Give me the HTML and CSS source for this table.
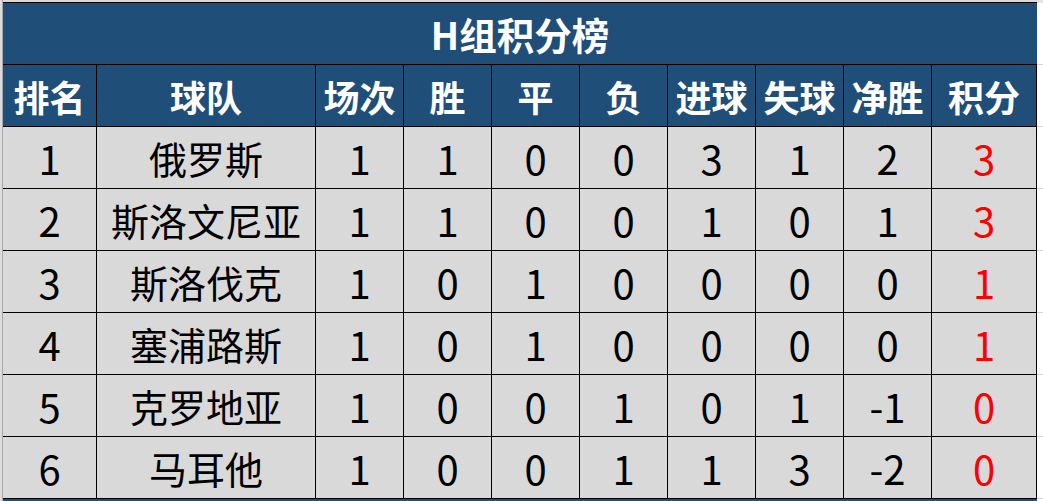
FILE: index.html
```html
<!DOCTYPE html>
<html lang="zh-CN">
<head>
<meta charset="utf-8">
<title>H组积分榜</title>
<link rel="stylesheet" href="styles.css">
</head>
<body>
<div class="sheet">
  <div class="gutter"></div>
  <div class="board">
    <div class="strip"></div>
    <div class="title">H组积分榜</div>

    <div class="hd">排名</div><div class="hd">球队</div><div class="hd">场次</div><div class="hd">胜</div><div class="hd">平</div><div class="hd">负</div><div class="hd">进球</div><div class="hd">失球</div><div class="hd">净胜</div><div class="hd">积分</div>

    <div class="c">1</div><div class="c team">俄罗斯</div><div class="c">1</div><div class="c">1</div><div class="c">0</div><div class="c">0</div><div class="c">3</div><div class="c">1</div><div class="c">2</div><div class="c pts">3</div>
    <div class="c">2</div><div class="c team">斯洛文尼亚</div><div class="c">1</div><div class="c">1</div><div class="c">0</div><div class="c">0</div><div class="c">1</div><div class="c">0</div><div class="c">1</div><div class="c pts">3</div>
    <div class="c">3</div><div class="c team">斯洛伐克</div><div class="c">1</div><div class="c">0</div><div class="c">1</div><div class="c">0</div><div class="c">0</div><div class="c">0</div><div class="c">0</div><div class="c pts">1</div>
    <div class="c">4</div><div class="c team">塞浦路斯</div><div class="c">1</div><div class="c">0</div><div class="c">1</div><div class="c">0</div><div class="c">0</div><div class="c">0</div><div class="c">0</div><div class="c pts">1</div>
    <div class="c">5</div><div class="c team">克罗地亚</div><div class="c">1</div><div class="c">0</div><div class="c">0</div><div class="c">1</div><div class="c">0</div><div class="c">1</div><div class="c">-1</div><div class="c pts">0</div>
    <div class="c">6</div><div class="c team">马耳他</div><div class="c">1</div><div class="c">0</div><div class="c">0</div><div class="c">1</div><div class="c">1</div><div class="c">3</div><div class="c">-2</div><div class="c pts">0</div>

    <div class="next"></div>
  </div>
  <div class="rightfill">
    <div class="rf-top"></div>
    <div class="rf"></div><div class="rf"></div><div class="rf"></div><div class="rf"></div>
    <div class="rf"></div><div class="rf"></div><div class="rf"></div><div class="rf"></div>
  </div>
</div>
</body>
</html>
```

FILE: styles.css
```css
html, body {
  margin: 0;
  padding: 0;
  background: #ffffff;
}

.sheet {
  display: flex;
  width: 1043px;
  height: 501px;
  overflow: hidden;
  font-family: "Noto Sans CJK SC", "Microsoft YaHei", sans-serif;
}

.gutter {
  width: 3px;
  box-sizing: border-box;
  background: #dcdcdc;
  border-right: 1px solid #a8a8a8;
  flex: none;
}

.board {
  display: grid;
  grid-template-columns: 94px 219px repeat(7, 88px) 105px;
  grid-auto-rows: 62px;
  grid-template-rows: 3px 62px;
  flex: none;
}

.strip {
  grid-column: 1 / -1;
  background: #d9d9d9;
  border-bottom: 1px solid #000;
  box-sizing: border-box;
}

.title {
  grid-column: 1 / -1;
  background: #1f4e79;
  color: #fff;
  font-weight: 700;
  font-size: 37.5px;
  display: flex;
  align-items: center;
  justify-content: center;
  border-bottom: 1px solid #000;
  box-sizing: border-box;
}

.hd, .c {
  display: flex;
  align-items: center;
  justify-content: center;
  box-sizing: border-box;
  border-right: 1px solid #000;
  border-bottom: 1px solid #000;
  line-height: 1;
  white-space: nowrap;
}

.hd {
  background: #1f4e79;
  color: #fff;
  font-weight: 700;
  font-size: 36px;
}

.c {
  background: #d9d9d9;
  color: #000;
  font-weight: 400;
  font-size: 40px;
}

.c.team {
  font-size: 38px;
}

.pts {
  color: #ff0000;
}

.next {
  grid-column: 1 / -1;
  background: #1f4e79;
}

.rightfill {
  flex: 1;
  display: grid;
  grid-template-rows: 3px repeat(8, 62px);
}

.rf-top {
  background: #e4e4e4;
}

.rf {
  border-bottom: 1px solid #d4d4d4;
  box-sizing: border-box;
}
```
